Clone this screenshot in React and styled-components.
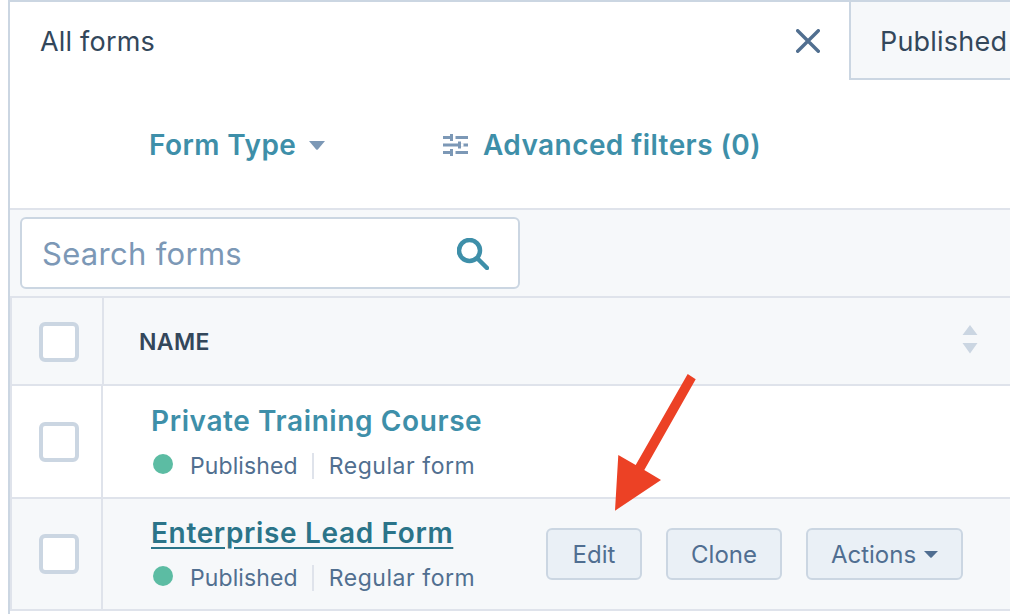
import React from "react";
import styled, { createGlobalStyle } from "styled-components";

const Global = createGlobalStyle`
  html, body { margin: 0; padding: 0; background: #fff; overflow: hidden; }
  body { font-family: "Inter", "Lato", sans-serif; }
  #root { width: 1010px; height: 614px; overflow: hidden; }
`;

const Page = styled.div`
  position: relative;
  width: 1010px;
  height: 614px;
  overflow: hidden;
  background: #fff;
  padding-left: 8px;
  box-sizing: border-box;
`;

const Frame = styled.div`
  width: 1040px;
  height: 614px;
  box-sizing: border-box;
  border-left: 2px solid #cbd6e2;
  border-top: 2px solid #cbd6e2;
`;

const Tabs = styled.div`
  display: flex;
  height: 78px;
`;

const ActiveTab = styled.div`
  width: 839px;
  box-sizing: border-box;
  display: flex;
  align-items: center;
  justify-content: space-between;
  padding: 0 29px 0 30px;
  font-size: 27px;
  letter-spacing: 0.2px;
  color: #33475b;
`;

const Tab = styled.div`
  flex: 1;
  box-sizing: border-box;
  display: flex;
  align-items: center;
  padding: 2px 0 0 29px;
  background: #f6f8fa;
  border-left: 2px solid #cbd6e2;
  border-bottom: 2px solid #cbd6e2;
  font-size: 27px;
  letter-spacing: 0.2px;
  color: #33475b;
`;

const Filters = styled.div`
  height: 128px;
  display: flex;
  align-items: center;
  padding: 2px 0 0 139px;
  box-sizing: border-box;
`;

const FilterLabel = styled.span`
  font-size: 28px;
  font-weight: 600;
  letter-spacing: 0.42px;
  color: #3e8fa9;
`;

const FormType = styled.div`
  display: flex;
  align-items: center;
  gap: 13px;
  width: 294px;
`;

const Advanced = styled.div`
  display: flex;
  align-items: center;
  gap: 15px;
`;

const Table = styled.div`
  border-left: 2px solid #dfe3eb;
`;

const Toolbar = styled.div`
  height: 90px;
  box-sizing: border-box;
  margin-left: -2px;
  padding: 7px 0 0 10px;
  background: #f6f8fa;
  border-top: 2px solid #dfe3eb;
  border-bottom: 2px solid #dfe3eb;
`;

const Search = styled.div`
  width: 500px;
  height: 72px;
  box-sizing: border-box;
  background: #fff;
  border: 2px solid #cbd6e2;
  border-radius: 6px;
  display: flex;
  align-items: center;
  justify-content: space-between;
  padding: 1px 29px 0 20px;
  font-size: 31px;
  letter-spacing: 0.3px;
  color: #7c98b6;
`;

const Row = styled.div`
  display: flex;
  height: ${(p) => p.$h}px;
  background: ${(p) => (p.$tint ? "#f6f8fa" : "#fff")};
  border-bottom: 2px solid #dfe3eb;
`;

const CheckCell = styled.div`
  width: ${(p) => p.$w}px;
  flex: none;
  display: flex;
  align-items: center;
  padding: ${(p) => p.$top || 0}px 0 0 27px;
  box-sizing: border-box;
  border-right: 2px solid #dfe3eb;
`;

const Check = styled.div`
  width: 40px;
  height: 40px;
  box-sizing: border-box;
  background: #fff;
  border: 4px solid #cbd6e2;
  border-radius: 6px;
`;

const HeaderCell = styled.div`
  flex: 0 0 874px;
  box-sizing: border-box;
  display: flex;
  align-items: center;
  justify-content: space-between;
  padding: 2px 0 0 35px;
`;

const HeaderLabel = styled.span`
  font-size: 23px;
  font-weight: 600;
  letter-spacing: 0.4px;
  color: #33475b;
`;

const NameCell = styled.div`
  flex: 1;
  display: flex;
  align-items: center;
  padding-left: 48px;
`;

const NameBlock = styled.div`
  display: flex;
  flex-direction: column;
  gap: 14px;
  width: 395px;
  margin-top: -2px;
`;

const Title = styled.a`
  font-size: 28px;
  font-weight: 600;
  line-height: 36px;
  letter-spacing: ${(p) => (p.$hover ? 0.65 : 0.6)}px;
  color: ${(p) => (p.$hover ? "#2b7489" : "#3e8fa9")};
  text-decoration: ${(p) => (p.$hover ? "underline" : "none")};
  text-underline-offset: 4px;
`;

const Meta = styled.div`
  display: flex;
  align-items: center;
  height: 26px;
  font-size: 23px;
  color: #516f90;
`;

const MetaText = styled.span`
  letter-spacing: ${(p) => p.$track}px;
`;

const Dot = styled.span`
  width: 20px;
  height: 20px;
  margin: -4px 17px 0 2px;
  border-radius: 50%;
  background: #5cbca3;
`;

const Divider = styled.span`
  width: 2px;
  height: 26px;
  margin: 0 15px 0 14px;
  background: #dfe3eb;
`;

const Actions = styled.div`
  display: flex;
  gap: 24px;
`;

const Button = styled.div`
  display: flex;
  align-items: center;
  justify-content: center;
  gap: 8px;
  width: ${(p) => p.$w}px;
  height: 52px;
  box-sizing: border-box;
  background: #eaf0f6;
  border: 2px solid #cbd6e2;
  border-radius: 6px;
  font-size: 24px;
  color: #506e91;
`;

const Arrow = styled.svg`
  position: absolute;
  left: 0;
  top: 0;
  pointer-events: none;
`;

const Sort = styled.svg`
  flex: none;
  margin-top: -6px;
`;

const SortIcon = () => (
  <Sort width="16" height="29" viewBox="0 0 16 29">
    <path d="M8 0 L15.500 10 H0.500 Z M0.500 18 H15.500 L8 28.500 Z" fill="#cbd6e2" />
  </Sort>
);

const Caret = ({ w, h, color }) => (
  <svg width={w} height={h} viewBox="0 0 16 9" preserveAspectRatio="none">
    <path d="M0 0 H16 L8.800 8.500 Q8 9 7.200 8.500 Z" fill={color} />
  </svg>
);

const SliderIcon = () => (
  <svg width="25" height="24" viewBox="0 0 25 24" fill="none" stroke="#7c98b6" strokeWidth="3">
    <path d="M0 4.500 H25 M0 12 H25 M0 19.500 H25" />
    <path d="M10 4.500 H12.500 M18 12 H20.500 M10 19.500 H12.500" stroke="#fff" strokeWidth="3.500" />
    <path d="M8.500 1 V8 M16.500 8.500 V15.500 M8.500 16 V23" />
  </svg>
);

const SearchIcon = () => (
  <svg width="32" height="32" viewBox="0 0 32 32" fill="none" stroke="#3e8fa9" strokeWidth="4.500" strokeLinecap="round">
    <circle cx="12.500" cy="12.500" r="10.500" />
    <path d="M20.500 20.500 L30 30" />
  </svg>
);

const CloseIcon = () => (
  <svg width="24" height="24" viewBox="0 0 24 24" fill="none" stroke="#516f90" strokeWidth="3.400" strokeLinecap="round">
    <path d="M1.700 1.700 L22.300 22.300 M22.300 1.700 L1.700 22.300" />
  </svg>
);

const FormRow = ({ title, hover, tint, h, children }) => (
  <Row $h={h} $tint={tint}>
    <CheckCell $w={91}><Check /></CheckCell>
    <NameCell>
      <NameBlock>
        <Title $hover={hover}>{title}</Title>
        <Meta>
          <Dot />
          <MetaText $track={0.1}>Published</MetaText>
          <Divider />
          <MetaText $track={0.55}>Regular form</MetaText>
        </Meta>
      </NameBlock>
      {children}
    </NameCell>
  </Row>
);

export default function App() {
  return (
    <Page>
      <Global />
      <Frame>
        <Tabs>
          <ActiveTab>
            All forms
            <CloseIcon />
          </ActiveTab>
          <Tab>Published</Tab>
        </Tabs>
        <Filters>
          <FormType>
            <FilterLabel>Form Type</FilterLabel>
            <Caret w={16} h={9} color="#7c98b6" />
          </FormType>
          <Advanced>
            <SliderIcon />
            <FilterLabel>Advanced filters (0)</FilterLabel>
          </Advanced>
        </Filters>
        <Table>
          <Toolbar>
            <Search>
              Search forms
              <SearchIcon />
            </Search>
          </Toolbar>
          <Row $h={86} $tint>
            <CheckCell $w={92} $top={2}><Check /></CheckCell>
            <HeaderCell>
              <HeaderLabel>NAME</HeaderLabel>
              <SortIcon />
            </HeaderCell>
          </Row>
          <FormRow title="Private Training Course" h={111} />
          <FormRow title="Enterprise Lead Form" h={110} hover tint>
            <Actions>
              <Button $w={96}>Edit</Button>
              <Button $w={116}>Clone</Button>
              <Button $w={157}>
                Actions
                <Caret w={14} h={7} color="#506e91" />
              </Button>
            </Actions>
          </FormRow>
        </Table>
      </Frame>
      <Arrow width="1010" height="614" viewBox="0 0 1010 614">
        <path
          d="M687.700 374 L695.700 379.300 L644.300 470 L661 480 L615 510.700 L618.300 455 L635.700 465 Z"
          fill="#ec4125"
        />
      </Arrow>
    </Page>
  );
}
